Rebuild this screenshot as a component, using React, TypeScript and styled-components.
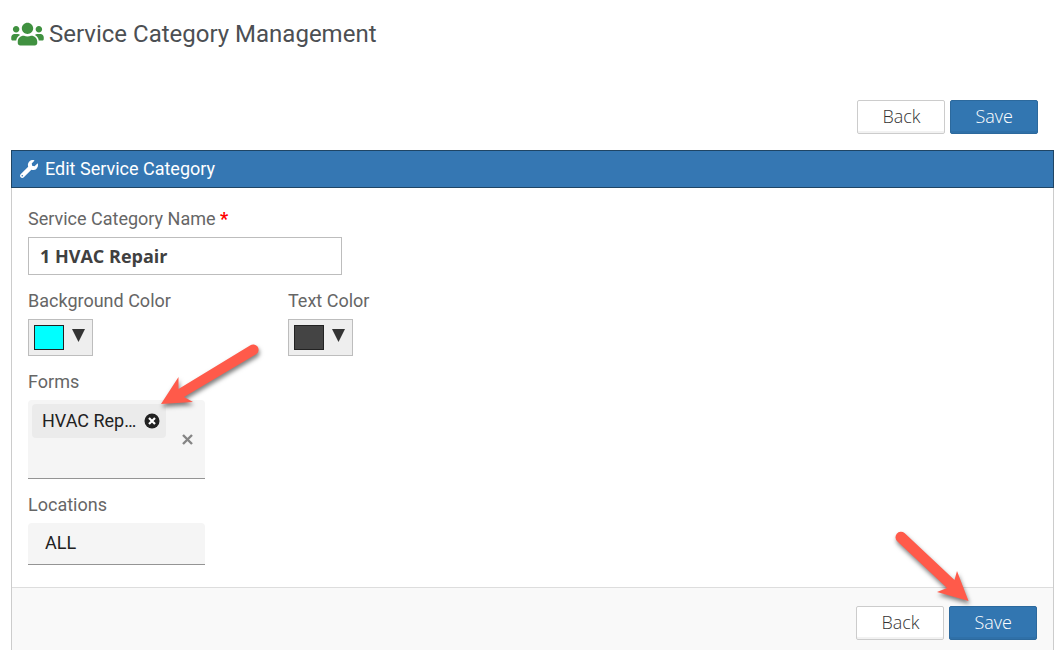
import React from "react";
import styled, { createGlobalStyle } from "styled-components";
import { FaUsers, FaWrench } from "react-icons/fa";

const GlobalStyle = createGlobalStyle`
  * { box-sizing: border-box; }
  body {
    margin: 0;
    background: #fff;
    font-family: Roboto, "Liberation Sans", sans-serif;
    font-size: 18px;
    line-height: 22px;
    color: #666;
  }
`;

const Page = styled.main`
  padding: 16px 7px 0 11px;
`;

const PageTitle = styled.h1`
  display: flex;
  align-items: center;
  gap: 5px;
  height: 36px;
  margin: 0;
  font-size: 24px;
  font-weight: 400;
  line-height: 36px;
  color: #4c4f53;

  svg {
    width: 33px;
    height: 26px;
    color: #409140;
  }
`;

const Actions = styled.div`
  display: flex;
  justify-content: flex-end;
  gap: 5px;
`;

const TopActions = styled(Actions)`
  padding: 48px 16px 16px 0;
`;

const ActionButton = styled.button<{ $primary?: boolean }>`
  height: 34px;
  padding: 0 24px 2px;
  border: 1px solid ${(p) => (p.$primary ? "#2c699d" : "#ccc")};
  border-radius: 2px;
  background: ${(p) => (p.$primary ? "#3276b1" : "#fff")};
  box-shadow: inset 0 -2px 0 rgba(0, 0, 0, 0.05);
  color: ${(p) => (p.$primary ? "#fff" : "#333")};
  font-family: "Open Sans", sans-serif;
  font-size: 18px;
  font-weight: 300;
  line-height: 24px;
`;

const Panel = styled.section`
  border: 1px solid #ccc;
  border-top: 0;
  border-bottom: 0;
`;

const PanelHeader = styled.header`
  display: flex;
  align-items: center;
  gap: 7px;
  height: 38px;
  margin: 0 -1px;
  padding: 0 8px 1px;
  border: 1px solid #1f4565;
  background: #3577b3;
  color: #fff;

  h2 {
    margin: 0;
    font-size: 18px;
    font-weight: 400;
  }
`;

const Fields = styled.div`
  display: grid;
  gap: 15px;
  padding: 20px 16px 22px;
`;

const FieldRow = styled.div`
  display: grid;
  grid-template-columns: 260px 1fr;
`;

const Field = styled.div`
  display: flex;
  flex-direction: column;
  align-items: flex-start;
  gap: 7px;
`;

const Required = styled.span`
  color: #f00;
  font-weight: 700;
`;

const TextInput = styled.input`
  width: 314px;
  max-width: 100%;
  height: 38px;
  padding: 0 11px;
  border: 1px solid #bdbdbd;
  border-radius: 0;
  color: #404040;
  font-family: "Open Sans", sans-serif;
  font-size: 18px;
  font-weight: 700;
`;

const ColorButton = styled.button`
  display: flex;
  align-items: center;
  gap: 8px;
  height: 37px;
  padding: 0 7px 0 5px;
  border: 1px solid #bdbdbd;
  background: #eee;
`;

const Swatch = styled.span<{ $color: string }>`
  width: 30px;
  height: 25px;
  border: 1px solid #222;
  background: ${(p) => p.$color};
`;

const Triangle = styled.svg`
  width: 13px;
  height: 13px;
  margin-bottom: 4px;
  fill: #333;
`;

const MultiSelect = styled.div`
  position: relative;
  display: flex;
  justify-content: space-between;
  align-items: center;
  width: 177px;
  height: 79px;
  padding: 4px 10px 4px 4px;
  border-bottom: 1px solid #949494;
  border-radius: 4px 4px 0 0;
  background: #f5f5f5;
`;

const Chip = styled.span`
  display: flex;
  align-items: center;
  align-self: flex-start;
  gap: 8px;
  height: 34px;
  padding: 0 6px 0 10px;
  border-radius: 4px;
  background: #ebebeb;
  color: #212121;
`;

const IconButton = styled.button`
  display: flex;
  padding: 0;
  border: 0;
  background: none;
`;

const LocationSelect = styled.select`
  appearance: none;
  width: 177px;
  height: 42px;
  padding: 0 17px 2px;
  border: 0;
  border-bottom: 1px solid #949494;
  border-radius: 4px 4px 0 0;
  background: #f5f5f5;
  color: #212121;
  font: inherit;
`;

const PanelFooter = styled.footer`
  padding: 18px 16px;
  border-top: 1px solid #ddd;
  background: #f9f9f9;
`;

const FooterActions = styled(Actions)`
  position: relative;
`;

const Pointer = styled.svg`
  position: absolute;
  overflow: visible;
  pointer-events: none;
  fill: #ff5a4a;
  filter: drop-shadow(1px 3px 2px rgba(0, 0, 0, 0.5));
`;

const FormsPointer = styled(Pointer)`
  left: 133px;
  top: -56px;
`;

const SavePointer = styled(Pointer)`
  right: 68px;
  top: -75px;
`;

function ColorField({ id, label, color }: { id: string; label: string; color: string }) {
  return (
    <Field>
      <label htmlFor={id}>{label}</label>
      <ColorButton id={id} type="button">
        <Swatch $color={color} />
        <Triangle viewBox="0 0 13 13" aria-hidden="true">
          <path d="M0 0H13L6.5 13Z" />
        </Triangle>
      </ColorButton>
    </Field>
  );
}

function ActionButtons() {
  return (
    <>
      <ActionButton type="button">Back</ActionButton>
      <ActionButton type="button" $primary>
        Save
      </ActionButton>
    </>
  );
}

export default function App() {
  return (
    <>
      <GlobalStyle />
      <Page>
        <PageTitle>
          <FaUsers aria-hidden="true" />
          Service Category Management
        </PageTitle>
        <TopActions>
          <ActionButtons />
        </TopActions>
        <Panel>
          <PanelHeader>
            <FaWrench size={18} aria-hidden="true" />
            <h2>Edit Service Category</h2>
          </PanelHeader>
          <Fields>
            <Field>
              <label htmlFor="name">
                Service Category Name <Required>*</Required>
              </label>
              <TextInput id="name" type="text" defaultValue="1 HVAC Repair" />
            </Field>
            <FieldRow>
              <ColorField id="background" label="Background Color" color="#0ff" />
              <ColorField id="text" label="Text Color" color="#444" />
            </FieldRow>
            <Field>
              <span id="forms-label">Forms</span>
              <MultiSelect role="group" aria-labelledby="forms-label">
                <Chip>
                  HVAC Rep…
                  <IconButton type="button" aria-label="Remove form">
                    <svg width="16" height="16" viewBox="0 0 16 16">
                      <circle cx="8" cy="8" r="7.5" fill="#212121" />
                      <path d="M5 5L11 11M11 5L5 11" stroke="#fff" strokeWidth="2.2" />
                    </svg>
                  </IconButton>
                </Chip>
                <IconButton type="button" aria-label="Clear forms">
                  <svg width="15" height="15" viewBox="0 0 15 15">
                    <path d="M3 3L12 12M12 3L3 12" stroke="#858585" strokeWidth="2.4" />
                  </svg>
                </IconButton>
                <FormsPointer width="98" height="62" viewBox="0 0 98 62" aria-hidden="true">
                  <path d="M0 60L17.500 33V45L89 1.500A5.200 5.200 0 0 1 95.500 10L23 53L32 58Z" />
                </FormsPointer>
              </MultiSelect>
            </Field>
            <Field>
              <label htmlFor="locations">Locations</label>
              <LocationSelect id="locations">
                <option>ALL</option>
              </LocationSelect>
            </Field>
          </Fields>
          <PanelFooter>
            <FooterActions>
              <ActionButtons />
              <SavePointer width="74" height="70" viewBox="0 0 74 70" aria-hidden="true">
                <path d="M9.500 2L59.500 49L62 40L73.500 70L42 61L52 57L2.500 10.500A5.500 5.500 0 0 1 9.500 2Z" />
              </SavePointer>
            </FooterActions>
          </PanelFooter>
        </Panel>
      </Page>
    </>
  );
}
